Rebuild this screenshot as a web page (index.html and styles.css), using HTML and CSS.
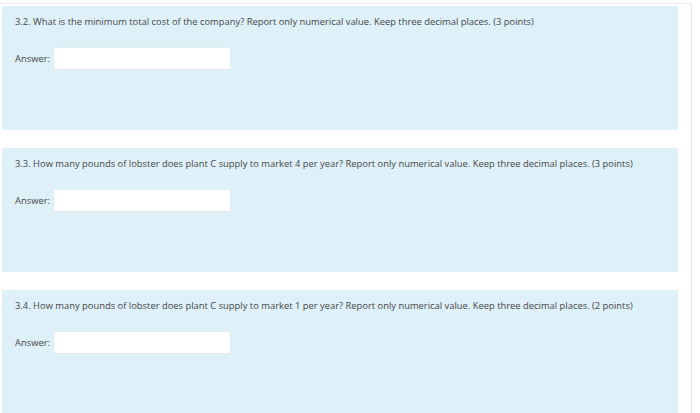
FILE: index.html
```html
<!DOCTYPE html>
<html>
<head>
<meta charset="utf-8">
<link rel="stylesheet" href="styles.css">
</head>
<body>
<div class="frame">
  <div class="question">
    <div class="qtext">3.2. What is the minimum total cost of the company? Report only numerical value. Keep three decimal places. (3 points)</div>
    <div class="answer"><label>Answer:</label><input type="text" class="field"></div>
  </div>
  <div class="question">
    <div class="qtext">3.3. How many pounds of lobster does plant C supply to market 4 per year? Report only numerical value. Keep three decimal places. (3 points)</div>
    <div class="answer"><label>Answer:</label><input type="text" class="field"></div>
  </div>
  <div class="question">
    <div class="qtext">3.4. How many pounds of lobster does plant C supply to market 1 per year? Report only numerical value. Keep three decimal places. (2 points)</div>
    <div class="answer"><label>Answer:</label><input type="text" class="field"></div>
  </div>
</div>
</body>
</html>
```
FILE: styles.css
```css
html, body {
  margin: 0;
  padding: 0;
  background: #ffffff;
  overflow: hidden;
}
body {
  font-family: "Open Sans", "Noto Sans", sans-serif;
  color: #474747;
}
.frame {
  margin-top: 3px;
  width: 692px;
  height: 420px;
  border-top: 1px solid #ececec;
  border-right: 1px solid #e6e6e6;
  padding: 2px 0 0 2px;
  box-sizing: border-box;
  display: flex;
  flex-direction: column;
  gap: 18px;
}
.question {
  width: 676px;
  height: 124px;
  flex: none;
  background: #def0f8;
  box-sizing: border-box;
  padding: 10px 13px 0 13px;
}
.qtext {
  font-size: 9.4px;
  line-height: 12px;
}
.answer {
  margin-top: 19px;
  display: flex;
  align-items: center;
  gap: 3px;
  font-size: 9.4px;
}
.field {
  width: 178px;
  height: 23px;
  box-sizing: border-box;
  border: 1px solid #e4ecf0;
  border-radius: 2px;
  background: #ffffff;
  padding: 0;
  margin: 0;
}
```
